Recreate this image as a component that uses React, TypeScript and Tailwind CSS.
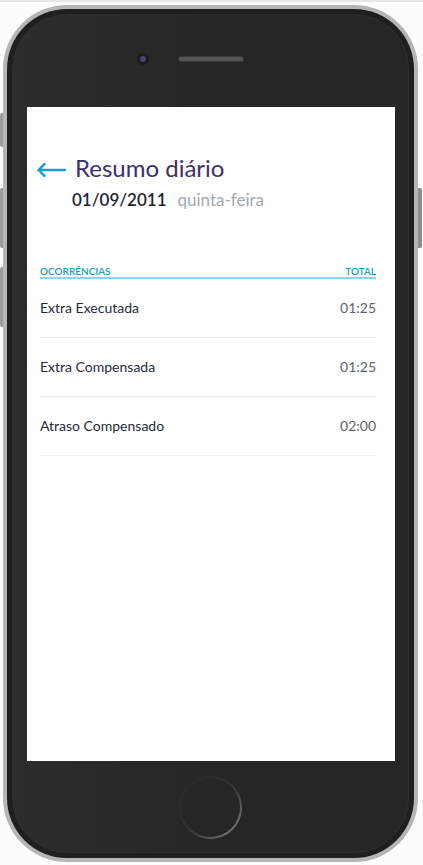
import React from 'react';

type Entry = { label: string; total: string };

const entries: Entry[] = [
  { label: 'Extra Executada', total: '01:25' },
  { label: 'Extra Compensada', total: '01:25' },
  { label: 'Atraso Compensado', total: '02:00' },
];

const font = { fontFamily: 'Lato, "Noto Sans", sans-serif' };

function BackArrow() {
  return (
    <svg width="30" height="14" viewBox="0 0 30 14" fill="none" className="shrink-0">
      <path d="M29 7H2.5M8.5 1.2L2.5 7l6 5.8" stroke="#1b9dca" strokeWidth="2.4" strokeLinecap="round" strokeLinejoin="round" />
    </svg>
  );
}

function DailySummary() {
  return (
    <div className="h-[654px] w-[368px] bg-white" style={font}>
      {/* title */}
      <div className="flex items-center pl-[9px] pt-[47px]">
        <div className="mt-[4px]">
          <BackArrow />
        </div>
        <h1 className="ml-[9px] text-[24px] leading-[28px] font-normal text-[#3b306e]">Resumo diário</h1>
      </div>
      <div className="mt-[7px] flex items-baseline pl-[45px] text-[17px] leading-[22px]">
        <span className="font-semibold text-[#1e2433]">01/09/2011</span>
        <span className="ml-[11px] text-[#a3aab0]">quinta-feira</span>
      </div>

      {/* table */}
      <div className="mt-[54px] pl-[13px] pr-[19px]">
        <div className="flex justify-between border-b-2 border-[#8fd3ea] text-[10px] leading-[12px] font-semibold text-[#1b9cc9]">
          <span>OCORRÊNCIAS</span>
          <span>TOTAL</span>
        </div>
        {entries.map((e) => (
          <div key={e.label} className="flex h-[59px] items-center justify-between border-b border-[#ececec] pb-[2px] text-[14px]">
            <span className="text-[#262b38]">{e.label}</span>
            <span className="text-[#5e646c]">{e.total}</span>
          </div>
        ))}
      </div>
    </div>
  );
}

export default function App() {
  return (
    <div className="relative h-[865px] w-[423px] overflow-hidden bg-[#fcfcfc]">
      <div className="h-[2px] bg-[#e6e6e6]" />

      {/* side buttons */}
      <div className="absolute left-0 top-[113px] h-[34px] w-[5px] rounded-l-[2px] bg-[#9c9c9c]" />
      <div className="absolute left-0 top-[188px] h-[60px] w-[5px] rounded-l-[2px] bg-[#9c9c9c]" />
      <div className="absolute left-0 top-[267px] h-[60px] w-[5px] rounded-l-[2px] bg-[#9c9c9c]" />
      <div className="absolute right-[1px] top-[188px] h-[60px] w-[5px] rounded-r-[2px] bg-[#8e8e8e]" />

      {/* phone */}
      <div className="relative ml-[3px] mt-[3px] h-[857px] w-[415px] rounded-[64px] bg-[#b5b5b5] p-[4px]">
        <div className="h-full w-full rounded-[60px] bg-[#1f1f1f] p-[5px]">
          <div className="flex h-full w-full flex-col rounded-[55px] border border-[#2f2f2f] bg-linear-to-r from-[#2d2d2d] via-[#262626] to-[#262626]">
            {/* earpiece */}
            <div className="grid h-[92px] grid-cols-[1fr_66px_1fr] items-start pt-[38px]">
              <div className="mr-[29px] flex h-[12px] w-[12px] items-center justify-center justify-self-end rounded-full bg-[#1b1b1b]">
                <div className="h-[6px] w-[6px] rounded-full bg-[#4b3f70]" />
              </div>
              <div className="mt-[3px] h-[6px] w-[66px] rounded-full border border-[#3a3a3a] bg-[#555555]" />
            </div>

            <div className="pl-[14px]">
              <DailySummary />
            </div>

            {/* home button */}
            <div className="mx-auto mt-[15px] h-[63px] w-[63px] rounded-full bg-linear-to-br from-[#262626] via-[#333333] to-[#8a8a8a] p-[2px]">
              <div className="h-full w-full rounded-full bg-[#262626]" />
            </div>
          </div>
        </div>
      </div>
    </div>
  );
}
